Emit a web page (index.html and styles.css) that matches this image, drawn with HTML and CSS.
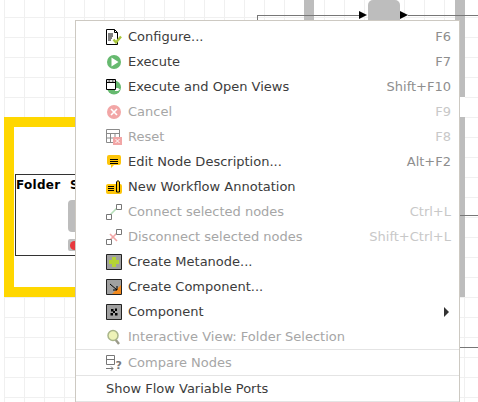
FILE: index.html
```html
<!DOCTYPE html>
<html lang="en">
<head>
    <meta charset="UTF-8">
    <meta name="viewport" content="width=device-width, initial-scale=1.0">
    <title>Workflow context menu</title>
    <link rel="stylesheet" href="styles.css">
</head>
<body>
    <div class="canvas">
        <!-- workflow behind the menu -->
        <div class="bar bar-left"></div>
        <div class="bar bar-right"></div>
        <div class="gap"></div>
        <div class="top-node"></div>
        <div class="wire wire-in"></div>
        <div class="wire wire-drop"></div>
        <div class="wire wire-out"></div>
        <div class="wire wire-a"></div>
        <div class="wire wire-b"></div>
        <div class="port port-in"></div>
        <div class="port port-out"></div>

        <div class="selection">
            <div class="node">
                <div class="node-title">Folder Selection</div>
                <div class="node-body"></div>
                <div class="node-status"><span class="status-dot"></span></div>
            </div>
        </div>

        <div class="menu">
            <div class="item">
                <svg class="icon" viewBox="0 0 16 16"><path d="M.5.500h8l3 3v12H.5z" fill="#fff" stroke="#000"/><path d="M8.500.5v3h3" fill="none" stroke="#000"/><path d="M2 5h5M2 7h5M2 9h4M2 11h3" stroke="#000"/><path d="M7.500 10.500l2.500 3 5-6" fill="none" stroke="#a8c63c" stroke-width="2.400"/></svg>
                <span class="label">Configure...</span><span class="key">F6</span>
            </div>
            <div class="item">
                <svg class="icon" viewBox="0 0 16 16"><circle cx="8" cy="8" r="7" fill="#66b96f"/><path d="M5.500 3.500v9l7-4.500z" fill="#fff"/></svg>
                <span class="label">Execute</span><span class="key">F7</span>
            </div>
            <div class="item">
                <svg class="icon" viewBox="0 0 16 16"><circle cx="8" cy="8.500" r="7" fill="#66b96f"/><path d="M9 9h3l2 1.500-2 1.500H9z" fill="#fff"/><path d="M.5.500h9v10h-9z" fill="#fff" stroke="#000"/><path d="M.5 3.500h9" stroke="#000"/><path d="M1 1h8v2H1z" fill="#ddd"/><path d="M2.500 2h1.500M6 2h1.500" stroke="#222"/></svg>
                <span class="label">Execute and Open Views</span><span class="key">Shift+F10</span>
            </div>
            <div class="item off">
                <svg class="icon" viewBox="0 0 16 16"><circle cx="8" cy="8" r="7" fill="#f2a6a6"/><path d="M5 5l6 6M11 5l-6 6" stroke="#fff" stroke-width="1.600"/></svg>
                <span class="label">Cancel</span><span class="key">F9</span>
            </div>
            <div class="item off">
                <svg class="icon" viewBox="0 0 16 16"><path d="M.5.500h13v13H.5zM.5 4.500h13M.5 9h13M4.500 4.500v9M9 4.500v9" fill="none" stroke="#8a8a8a"/><path d="M7 8h9v8H7z" fill="#f2a6a6"/><path d="M9.500 10l4 4M13.500 10l-4 4" stroke="#fff"/></svg>
                <span class="label">Reset</span><span class="key">F8</span>
            </div>
            <div class="item">
                <svg class="icon" viewBox="0 0 16 16"><path d="M3 1h10q2 0 2 2v6q0 2-2 2H8l-3 3v-3H3q-2 0-2-2V3q0-2 2-2z" fill="#fdc50b"/><path d="M4 5.500h8M4 7.500h8M4 9.500h8" stroke="#000"/></svg>
                <span class="label">Edit Node Description...</span><span class="key">Alt+F2</span>
            </div>
            <div class="item">
                <svg class="icon" viewBox="0 0 16 16"><path d="M2 5h12q2 0 2 2v6q0 2-2 2H2q-2 0-2-2V7q0-2 2-2z" fill="#fdc50b"/><path d="M2 7.500h6M2 9.500h6M2 11.500h6" stroke="#000"/><path d="M10.500 13V3q1.500-3 3 0v10h-3z" fill="#fdc50b" stroke="#000"/></svg>
                <span class="label">New Workflow Annotation</span><span class="key"></span>
            </div>
            <div class="item off">
                <svg class="icon" viewBox="0 0 16 16"><path d="M4 11l7-7" stroke="#b5dfb8" stroke-width="1.600"/><path d="M.5 10.500h5v5h-5zM10.500.5h5v5h-5z" fill="#fff" stroke="#777"/></svg>
                <span class="label">Connect selected nodes</span><span class="key">Ctrl+L</span>
            </div>
            <div class="item off">
                <svg class="icon" viewBox="0 0 16 16"><path d="M4 11l7-7" stroke="#f2a6a6" stroke-width="1.600"/><path d="M4 5l7 7" stroke="#f2a6a6" stroke-width="1.600"/><path d="M.5 10.500h5v5h-5zM10.500.5h5v5h-5z" fill="#fff" stroke="#777"/></svg>
                <span class="label">Disconnect selected nodes</span><span class="key">Shift+Ctrl+L</span>
            </div>
            <div class="item">
                <svg class="icon" viewBox="0 0 16 16"><path d="M.5.500h15v15H.5z" fill="#a0a0a0" stroke="#222"/><path d="M6 3h4v3h3v4h-3v3H6v-3H3V6h3z" fill="#b5d334"/></svg>
                <span class="label">Create Metanode...</span><span class="key"></span>
            </div>
            <div class="item">
                <svg class="icon" viewBox="0 0 16 16"><path d="M.5.500h15v15H.5z" fill="#a0a0a0" stroke="#222"/><path d="M15 6v9H6z" fill="#f28a1e"/><path d="M4 5l7 6M11 7v4H7" fill="none" stroke="#000"/></svg>
                <span class="label">Create Component...</span><span class="key"></span>
            </div>
            <div class="item">
                <svg class="icon" viewBox="0 0 16 16"><path d="M.5.500h15v15H.5z" fill="#a0a0a0" stroke="#222"/><path d="M5 5h2.500v2.500H5zM9 4.500h2V7H9zM7 7h2v2H7zM4.500 9H7v2.500H4.500zM9 9h2.500v2.500H9z" fill="#000"/></svg>
                <span class="label">Component</span><span class="arrow"></span>
            </div>
            <div class="item off">
                <svg class="icon" viewBox="0 0 16 16"><path d="M9 10l4 5" stroke="#9a9a8a" stroke-width="2.400"/><circle cx="7" cy="6.500" r="5" fill="#eef3b8" stroke="#a9b58a" stroke-width="1.500"/></svg>
                <span class="label">Interactive View: Folder Selection</span><span class="key"></span>
            </div>
            <div class="item item-rule off">
                <svg class="icon" viewBox="0 0 16 16"><path d="M.5.500h8v9h-8zM.5 4.500h8" fill="none" stroke="#777"/><path d="M0 13.500h7M5 11.500l2 2-2 2" fill="none" stroke="#777"/><text class="icon-mark" x="9.500" y="14">?</text></svg>
                <span class="label">Compare Nodes</span><span class="key"></span>
            </div>
            <div class="item item-rule item-last">
                <span class="label">Show Flow Variable Ports</span>
            </div>
        </div>
    </div>
</body>
</html>
```

FILE: styles.css
```css
* {
  box-sizing: border-box;
}

html,
body {
  margin: 0;
  height: 100%;
  overflow: hidden;
}

.canvas {
  position: relative;
  width: 478px;
  height: 402px;
  overflow: hidden;
  padding-left: 4px;
  background-color: #fff;
  background-image:
    linear-gradient(#f0f0f0 1px, transparent 1px),
    linear-gradient(90deg, #f0f0f0 1px, transparent 1px);
  background-size: 20px 20px;
  background-position: 0 17px;
  background-origin: content-box;
  background-clip: content-box;
  font-family: "DejaVu Sans", sans-serif;
}

.bar {
  position: absolute;
  top: 0;
  width: 10px;
  height: 297px;
  background-color: #bdbdbd;
}

.bar-left {
  left: 304px;
}

.bar-right {
  left: 455px;
}

.gap {
  position: absolute;
  left: 455px;
  top: 97px;
  width: 10px;
  height: 20px;
  background-color: #fff;
}

.top-node {
  position: absolute;
  left: 368px;
  top: 0;
  width: 32px;
  height: 32px;
  background-color: #bdbdbd;
  border-radius: 5px;
}

.wire {
  position: absolute;
  background-color: #777;
}

.wire-in {
  left: 257px;
  top: 15px;
  width: 103px;
  height: 1px;
}

.wire-drop {
  left: 257px;
  top: 15px;
  width: 1px;
  height: 10px;
}

.wire-out {
  left: 408px;
  top: 15px;
  width: 70px;
  height: 1px;
}

.wire-a {
  left: 455px;
  top: 215px;
  width: 23px;
  height: 1px;
}

.wire-b {
  left: 455px;
  top: 347px;
  width: 23px;
  height: 1px;
}

.port {
  position: absolute;
  top: 11px;
  border-style: solid;
  border-width: 4px 0 4px 8px;
  border-color: transparent transparent transparent #000;
}

.port-in {
  left: 359px;
}

.port-out {
  left: 400px;
}

.selection {
  position: absolute;
  left: 4px;
  top: 117px;
  width: 200px;
  height: 180px;
  border: 10px solid #ffd700;
  background-color: #fff;
  padding: 47px 0 0 1px;
}

.node {
  position: relative;
  width: 120px;
  height: 82px;
  border: 1px solid #333;
  background-color: #fff;
}

.node-title {
  font-size: 12px;
  font-weight: bold;
  color: #000;
  white-space: nowrap;
  letter-spacing: 0.3px;
  word-spacing: 5px;
  padding: 3px 0 0 0;
}

.node-body {
  position: absolute;
  left: 52px;
  top: 25px;
  width: 32px;
  height: 32px;
  background-color: #bdbdbd;
  border-radius: 4px;
}

.node-status {
  position: absolute;
  left: 52px;
  top: 64px;
  width: 32px;
  height: 12px;
  background-color: #bdbdbd;
  border-radius: 2px;
}

.status-dot {
  display: block;
  width: 9px;
  height: 9px;
  margin: 2px 0 0 2px;
  border-radius: 50%;
  background-color: #e8383d;
}

.menu {
  position: absolute;
  left: 75px;
  top: 20px;
  width: 385px;
  height: 382px;
  display: flex;
  flex-direction: column;
  padding-top: 3px;
  background-color: #fff;
  border: 1px solid #cdc9c2;
  border-bottom: none;
  font-size: 13px;
  color: #3c3c3c;
}

.item {
  display: flex;
  align-items: center;
  height: 25px;
  flex: none;
  padding: 0 8px 0 30px;
}

.item-rule {
  border-top: 1px solid #e4e4e4;
  height: 26px;
}

.item-last {
  border-bottom: 1px solid #e4e4e4;
  height: 27px;
}

.icon {
  flex: none;
  width: 16px;
  height: 16px;
  margin-right: 6px;
}

.icon-mark {
  font-size: 11px;
  font-weight: bold;
  fill: #777;
}

.label {
  flex: 1;
  white-space: nowrap;
}

.key {
  color: #8e8e8e;
  white-space: nowrap;
}

.off .label {
  color: #a6a6a6;
}

.off .key {
  color: #c8c8c8;
}

.arrow {
  border-style: solid;
  border-width: 5px 0 5px 5px;
  border-color: transparent transparent transparent #333;
  margin-right: 2px;
}
```
